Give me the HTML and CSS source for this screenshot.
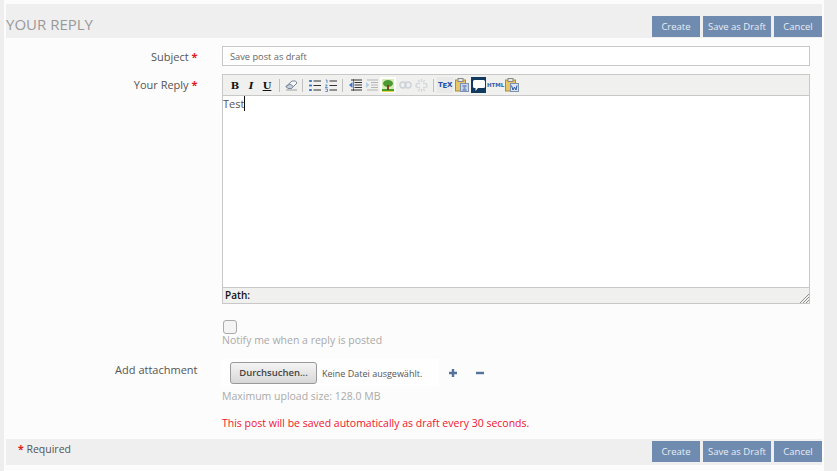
FILE: index.html
```html
<!DOCTYPE html>
<html lang="en">
<head>
<meta charset="utf-8">
<title>Your Reply</title>
<link rel="stylesheet" href="styles.css">
</head>
<body>
<main class="page">
  <header class="band band-top">
    <h2 class="title">YOUR REPLY</h2>
    <div class="actions">
      <button class="btn btn-create">Create</button>
      <button class="btn btn-draft">Save as Draft</button>
      <button class="btn btn-cancel">Cancel</button>
    </div>
  </header>
  <div class="form">
    <div class="row row-subject">
      <label class="label">Subject <span class="req">*</span></label>
      <div class="field"><div class="input">Save post as draft</div></div>
    </div>
    <div class="row row-reply">
      <label class="label">Your Reply <span class="req">*</span></label>
      <div class="field">
        <div class="editor">
          <div class="toolbar">
            <span class="tool t-b">B</span>
            <span class="tool t-i">I</span>
            <span class="tool t-u">U</span>
            <span class="sep sep1"></span>
            <svg class="ico ic-eraser" width="13" height="12" viewBox="0 0 13 12"><path d="M1 7.500 7 2h3.500l1.500 2-5.500 5.500H3z" fill="#f6f8fb" stroke="#7a8798"/><path d="M1 7.500l2 2h3.500L8.500 7.500 5 5z" fill="#c4cedb" stroke="#7a8798"/><path d="M1 11h11" stroke="#a0a0a0"/></svg>
            <span class="sep sep2"></span>
            <svg class="ico ic-ul" width="12" height="11" viewBox="0 0 12 11"><g fill="#3d78c4"><rect x="0" y="0" width="3" height="2" rx=".8"/><rect x="0" y="4.500" width="3" height="2" rx=".8"/><rect x="0" y="9" width="3" height="2" rx=".8"/></g><path d="M4.500 1H12M4.500 5.500H12M4.500 10H12" stroke="#333"/></svg>
            <svg class="ico ic-ol" width="12" height="13" viewBox="0 0 12 13"><path d="M.8 1H2v3M.3 6h2L.3 8.500h2.400M.3 10h2.200v2.500H.3" fill="none" stroke="#3d78c4" stroke-width=".8"/><path d="M4.500 2H12M4.500 6.500H12M4.500 11H12" stroke="#333"/></svg>
            <span class="sep sep3"></span>
            <svg class="ico ic-out" width="13" height="13" viewBox="0 0 13 13"><path d="M2 1h11M5.500 3.500H13M5.500 6H13M5.500 8.500H13M2 11h11" stroke="#333"/><path d="M0 6l3.500-3v6z" fill="#3d78c4"/><path d="M4.500 0v12" stroke="#333" stroke-width=".6"/></svg>
            <svg class="ico ic-in" width="12" height="13" viewBox="0 0 12 13"><path d="M1 1h11M5 3.500h7M5 6h7M5 8.500h7M1 11h11" stroke="#b5b5b5"/><path d="M3.500 6L0 3v6z" fill="#b9cde6"/></svg>
            <span class="img-tool"><svg width="12" height="13" viewBox="0 0 12 13"><rect width="12" height="13" fill="#d6ecb4"/><rect y="10" width="12" height="3" fill="#4aa02c"/><ellipse cx="6" cy="4.500" rx="5" ry="3.500" fill="#4d9a35"/><rect x="5" y="6" width="2" height="5" fill="#7a4a1e"/><path d="M0 12.500h12" stroke="#e8d44a"/></svg></span>
            <svg class="ico ic-link" width="13" height="8" viewBox="0 0 13 8"><g fill="none" stroke="#cdd2d8" stroke-width="1.500"><rect x="1" y="1" width="6" height="6" rx="3"/><rect x="6" y="1" width="6" height="6" rx="3"/></g></svg>
            <svg class="ico ic-unlink" width="13" height="13" viewBox="0 0 13 13"><g fill="none" stroke="#d5d9de" stroke-width="1.400"><path d="M5 4.500H3a2 2 0 0 0 0 4h2M8 4.500h2a2 2 0 0 1 0 4H8"/><path d="M6.500 0v3M6.500 10v3M3 1l2 2M10 1 8 3M3 12l2-2M10 12l-2-2"/></g></svg>
            <span class="sep sep4"></span>
            <span class="tex">T<i>E</i>X</span>
            <svg class="ico ic-paste" width="14" height="14" viewBox="0 0 14 14"><rect x=".5" y="2" width="10" height="11" fill="#e8c565" stroke="#b08a35"/><rect x="3" y=".5" width="5" height="3" fill="#e8e8e8" stroke="#888"/><rect x="5.500" y="5.500" width="8" height="8" fill="#c9d6ec" stroke="#7d90b0"/><path d="M7.500 8h4M8.500 10h2M7.500 12h4" stroke="#3d5fa0"/></svg>
            <span class="bubble"><svg width="12" height="11" viewBox="0 0 12 11"><path d="M1.500 0h9A1.500 1.500 0 0 1 12 1.500v5A1.500 1.500 0 0 1 10.500 8H5L2.500 11V8h-1A1.500 1.500 0 0 1 0 6.500v-5A1.500 1.500 0 0 1 1.500 0z" fill="#fff"/></svg></span>
            <span class="html">HTML</span>
            <svg class="ico ic-word" width="14" height="14" viewBox="0 0 14 14"><rect x=".5" y="2" width="10" height="11" fill="#e8c565" stroke="#b08a35"/><rect x="3" y=".5" width="5" height="3" fill="#e8e8e8" stroke="#888"/><rect x="5.500" y="5.500" width="8" height="8" fill="#dbe5f5" stroke="#7d90b0"/><path d="M6.500 7.500l1.500 4.500 1.500-3 1.500 3 1-4.500" fill="none" stroke="#2b56a8"/></svg>
          </div>
          <div class="body-area"><span class="typed">Test</span><span class="caret"></span></div>
          <div class="statusbar"><span class="path">Path:</span>
            <svg class="grip" width="9" height="9" viewBox="0 0 9 9"><path d="M0 9 9 0M3 9l6-6M6 9l3-3" stroke="#8f8f8f" fill="none"/></svg>
          </div>
        </div>
      </div>
    </div>
    <div class="row row-notify">
      <div class="label"></div>
      <div class="field">
        <span class="checkbox"></span>
        <div class="hint hint-notify">Notify me when a reply is posted</div>
      </div>
    </div>
    <div class="row row-attach">
      <label class="label">Add attachment</label>
      <div class="field">
        <div class="file-line">
          <div class="file-box">
            <span class="file-btn">Durchsuchen...</span>
            <span class="file-name">Keine Datei ausgewählt.</span>
          </div>
          <span class="pm pm-plus"><svg width="10" height="10" viewBox="0 0 10 10"><path d="M5 1v8M1 5h8" stroke="#54729c" stroke-width="2.400"/></svg></span>
          <span class="pm pm-minus"><svg width="10" height="10" viewBox="0 0 10 10"><path d="M1 5h8" stroke="#54729c" stroke-width="2.400"/></svg></span>
        </div>
        <div class="hint hint-size">Maximum upload size: 128.0 MB</div>
        <div class="warn">This post will be saved automatically as draft every 30 seconds.</div>
      </div>
    </div>
  </div>
  <footer class="band band-bottom">
    <div class="required"><span class="req">*</span> Required</div>
    <div class="actions">
      <button class="btn btn-create">Create</button>
      <button class="btn btn-draft">Save as Draft</button>
      <button class="btn btn-cancel">Cancel</button>
    </div>
  </footer>
</main>
</body>
</html>
```

FILE: styles.css
```css
* { box-sizing: border-box; }
html, body { margin: 0; height: 100%; }
body {
  background: #eeeeee;
  font-family: "Open Sans", sans-serif;
  font-size: 11px;
  color: #555;
  overflow: hidden;
}
.page {
  margin-left: 4px;
  width: 820px;
  height: 471px;
  background: #fcfcfc;
  padding: 4px 2px 0;
}
.band {
  background: #efefef;
  display: flex;
  justify-content: space-between;
}
.band-top { height: 34px; align-items: flex-end; }
.band-top .actions { margin-bottom: 1px; }
.band-bottom { height: 26px; margin-top: 9px; align-items: flex-start; }
.band-bottom .actions { margin-top: 2px; }
.title {
  margin: 0 0 4px;
  font-size: 15px;
  line-height: 19px;
  font-weight: 400;
  color: #999;
}
.actions { display: flex; gap: 3px; }
.btn {
  border: 0;
  padding: 0;
  height: 21px;
  background: #6f8bb0;
  color: #e8edf4;
  font: 400 9.500px/21px "Open Sans", sans-serif;
  text-align: center;
}
.btn-create { width: 48px; }
.btn-draft { width: 68px; }
.btn-cancel { width: 48px; }
.form { padding-top: 8px; }
.row { display: flex; }
.row-subject { height: 20px; }
.label {
  flex: none;
  width: 191.500px;
  margin-right: .5px;
  padding-top: 1px;
  text-align: right;
  font-size: 11px;
  line-height: 20px;
  color: #555;
}
.req { color: #e02020; font-weight: 700; }
.field { margin-left: 24px; width: 588px; }
.input {
  height: 20px;
  border: 1px solid #c8c8c8;
  background: #fff;
  padding-left: 7px;
  font-size: 9.250px;
  line-height: 20px;
  color: #666;
}
.row-reply { margin-top: 8px; }
.row-reply .label { padding-top: 0; line-height: 21px; }
.editor {
  height: 230px;
  border: 1px solid #c8c8c8;
  display: flex;
  flex-direction: column;
  background: #fff;
}
.toolbar {
  flex: none;
  height: 21px;
  background: #f0f0ee;
  border-bottom: 1px solid #c8c8c8;
  display: flex;
  align-items: center;
  padding-left: 6px;
}
.tool {
  flex: none;
  width: 12px;
  text-align: center;
  font-family: "DejaVu Serif", serif;
  font-size: 10px;
  font-weight: 700;
  color: #111;
  margin-right: 4px;
}
.t-i { font-style: italic; }
.t-u { text-decoration: underline; }
.sep { width: 1px; height: 13px; background: #c0c0c0; flex: none; }
.ico { flex: none; }
.sep1 { margin: 0 5px 0 2px; }
.ic-eraser { margin-right: 4px; }
.sep2 { margin-right: 6px; }
.ic-ul { margin-right: 4px; }
.ic-ol { margin-right: 5px; }
.sep3 { margin-right: 6px; }
.ic-out { margin-right: 4px; }
.ic-in { margin-right: 2px; }
.img-tool {
  width: 16px;
  height: 16px;
  background: #fff;
  display: flex;
  align-items: center;
  justify-content: center;
  flex: none;
  margin-right: 3px;
}
.ic-link { margin-right: 3px; }
.ic-unlink { margin-right: 5px; }
.sep4 { margin-right: 3px; }
.tex {
  width: 16px;
  height: 16px;
  background: #e9e9e9;
  color: #2450a8;
  font: 700 7px/16px "DejaVu Sans", sans-serif;
  text-align: center;
  flex: none;
  margin-right: 2px;
  letter-spacing: -.3px;
}
.tex i { font-style: normal; position: relative; top: 1px; }
.ic-paste { margin-right: 2px; }
.bubble {
  width: 15px;
  height: 16px;
  background: #12395e;
  display: flex;
  align-items: center;
  justify-content: center;
  flex: none;
  margin-right: 1px;
}
.html {
  color: #3a5f9f;
  font: 700 5.500px/16px "DejaVu Sans", sans-serif;
  width: 16px;
  text-align: center;
  flex: none;
  margin-right: 2px;
}
.body-area {
  flex: 1;
  display: flex;
  align-items: flex-start;
  font-size: 11px;
  line-height: 15px;
  color: #555;
}
.caret { width: 1px; height: 15px; background: #111; }
.statusbar {
  flex: none;
  height: 16px;
  background: #f0f0ee;
  border-top: 1px solid #c8c8c8;
  display: flex;
  justify-content: space-between;
  align-items: flex-end;
  padding-left: 2px;
}
.path { font-size: 10px; line-height: 14px; margin-bottom: 1px; color: #111; font-weight: 600; }
.row-notify { margin-top: 16px; }
.checkbox {
  display: block;
  width: 14px;
  height: 14px;
  margin-left: 1px;
  background: #f4f4f4;
  border: 1px solid #aaa;
  border-radius: 3px;
}
.hint { font-size: 10.500px; line-height: 14px; color: #aaa; }
.hint-notify { margin-top: -1px; }
.row-attach { margin-top: 12px; }
.file-line { display: flex; align-items: center; }
.file-box {
  width: 218px;
  height: 28px;
  margin-left: -1px;
  background: #fefefe;
  display: flex;
  align-items: center;
  padding-left: 9px;
}
.file-btn {
  width: 87px;
  height: 22px;
  border: 1px solid #999;
  border-radius: 3px;
  background: linear-gradient(#f4f4f4, #d8d8d8);
  font-size: 9.500px;
  line-height: 20px;
  font-weight: 600;
  text-align: center;
  color: #444;
}
.file-name { margin-left: 5px; font-size: 9px; color: #555; }
.pm { display: flex; }
.pm-plus { margin-left: 9px; }
.pm-minus { margin-left: 17px; }
.hint-size { margin-top: 2px; }
.warn { margin-top: 13px; font-size: 10.500px; line-height: 14px; color: #f0142d; }
.required { margin: 3px 0 0 12px; line-height: 15px; font-size: 10.500px; color: #555; }
```
